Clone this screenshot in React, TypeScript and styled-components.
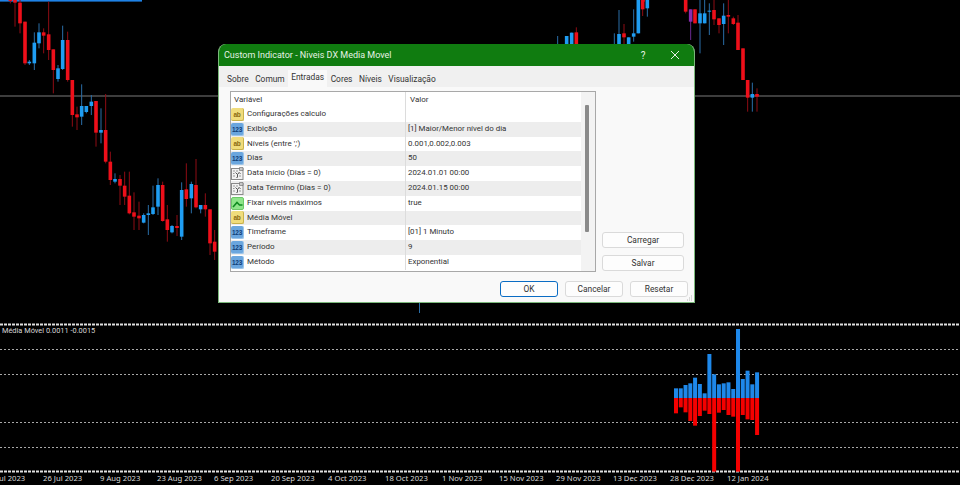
import React from "react";
import styled, { createGlobalStyle, css } from "styled-components";

const Global = createGlobalStyle`
  html, body { margin: 0; padding: 0; background: #000; overflow: hidden; }
  * { box-sizing: border-box; }
`;

const FONT = `Roboto, "Open Sans", "Liberation Sans", sans-serif`;

const Screen = styled.div`
  position: relative;
  width: 960px;
  height: 485px;
  background: #000;
  display: flex;
  flex-direction: column;
  overflow: hidden;
`;
const MainChart = styled.svg`
  display: block;
  flex: 0 0 323px;
  width: 960px;
  height: 323px;
`;
const Pane = styled.div`
  position: relative;
  flex: 0 0 150px;
  height: 150px;
`;
const PaneDrawing = styled.svg`
  display: block;
  width: 960px;
  height: 150px;
`;
const Legend = styled.div`
  position: absolute;
  left: 2px;
  top: 3px;
  font: 7.4px/10px Roboto, sans-serif;
  color: #d8d8d8;
  white-space: nowrap;
`;
const Axis = styled.div`
  display: flex;
  margin-left: -14px;
`;
const AxisLabel = styled.div`
  flex: 0 0 57px;
  font: 7.7px/11px "Noto Sans", sans-serif;
  color: #d8d8d8;
  white-space: nowrap;
`;

const Dialog = styled.div`
  position: absolute;
  left: 218px;
  top: 44px;
  width: 477px;
  height: 259px;
  border-radius: 8px 8px 0 0;
  background: #f9f9f9;
  border: 1px solid #7ab87a;
  border-top: 0;
  display: flex;
  flex-direction: column;
  font-family: ${FONT};
  color: #222;
  overflow: hidden;
`;
const TitleBar = styled.div`
  flex: 0 0 22px;
  margin: 0 -1px;
  background: #107c10;
  display: flex;
  align-items: center;
  padding: 0 15px 0 6px;
  color: #e6f2e6;
  font-size: 9px;
`;
const TitleText = styled.div`
  flex: 1;
`;
const TitleGlyph = styled.div`
  font-size: 10px;
  width: 12px;
  text-align: center;
  margin-right: 21px;
`;
const TabStrip = styled.div`
  flex: 0 0 21px;
  background: #f0f0f0;
  display: flex;
  align-items: flex-end;
  padding-left: 5px;
`;
const Tab = styled.div<{ $active?: boolean }>`
  height: 16px;
  line-height: 17px;
  font-size: 8.4px;
  padding: 0 3px;
  margin-right: 0.5px;
  color: #333;
  ${(p) =>
    p.$active &&
    css`
      background: #f9f9f9;
      height: 17px;
      line-height: 15px;
    `}
`;
const Panel = styled.div`
  flex: 1;
  display: flex;
  padding: 4px 10px 0 11px;
`;
const ListBox = styled.div`
  flex: 0 0 366px;
  height: 181px;
  border: 1px solid #a8a8a8;
  background: #fff;
  display: grid;
  grid-template-columns: 1fr 14px;
  overflow: hidden;
`;
const Rows = styled.div`
  min-width: 0;
`;
const Row = styled.div<{ $alt?: boolean; $head?: boolean }>`
  display: grid;
  grid-template-columns: 175px 1fr;
  height: ${(p) => (p.$head ? "15px" : "14.8px")};
  background: ${(p) => (p.$alt ? "#ededed" : "#fff")};
  font-size: 8px;
  line-height: ${(p) => (p.$head ? "16px" : "14.8px")};
  color: #333;
`;
const NameCell = styled.div`
  display: flex;
  align-items: center;
  gap: 3px;
  border-right: 1px solid #dcdcdc;
  white-space: nowrap;
  overflow: hidden;
`;
const HeadCell = styled.div<{ $first?: boolean }>`
  padding-left: ${(p) => (p.$first ? "3px" : "4px")};
  font-size: 8px;
  ${(p) => p.$first && "border-right: 1px solid #dcdcdc;"}
`;
const ValueCell = styled.div`
  padding-left: 2px;
  font-size: 7.9px;
  white-space: nowrap;
  overflow: hidden;
`;
const Track = styled.div`
  background: #f3f3f3;
  display: flex;
  justify-content: center;
  padding: 13px 2px 0 0;
`;
const Thumb = styled.div`
  width: 4px;
  height: 127px;
  background: #8a8a8a;
  border-radius: 1px;
`;
const Side = styled.div`
  flex: 1;
  display: flex;
  flex-direction: column;
  align-items: flex-start;
  justify-content: flex-end;
  padding: 0 0 1px 6px;
  gap: 7px;
`;
const Btn = styled.div<{ $primary?: boolean; $w: number }>`
  width: ${(p) => p.$w}px;
  height: 16px;
  background: #fdfdfd;
  border: 1px solid ${(p) => (p.$primary ? "#0a6cc4" : "#dadada")};
  border-radius: 3px;
  text-align: center;
  font-size: 8.4px;
  line-height: 14px;
  color: #333;
`;
const Footer = styled.div`
  flex: 0 0 36px;
  display: flex;
  justify-content: flex-end;
  gap: 7px;
  padding: 9px 6px 0 0;
`;
const Grip = styled.svg`
  position: absolute;
  right: 1px;
  bottom: 1px;
  width: 6px;
  height: 6px;
`;

const Badge = styled.span<{ $kind: "ab" | "num" }>`
  flex: 0 0 13px;
  width: 13px;
  height: 13px;
  border-radius: 2px;
  font: bold 6.5px/13px "Liberation Sans", sans-serif;
  text-align: center;
  letter-spacing: -0.3px;
  ${(p) =>
    p.$kind === "ab"
      ? css`
          background: #f0dc7c;
          border-right: 1px solid #c9b24a;
          border-bottom: 1px solid #c9b24a;
          color: #8a6a10;
        `
      : css`
          background: #6aa6de;
          border-right: 1px solid #9cc4e8;
          border-bottom: 1px solid #9cc4e8;
          color: #123f78;
        `}
`;
const IconSvg = styled.svg`
  flex: 0 0 13px;
  width: 13px;
  height: 13px;
`;

const DateIcon = () => (
  <IconSvg viewBox="0 0 13 13">
    <rect x="0.5" y="1.5" width="11.5" height="11" fill="#f2f2f2" stroke="#8a8a8a" />
    <path d="M2 4h2M5 4h2M2 6.5h1.5M8.5 6.5h1.5M2 9h2M5 10.5h2M8 9h2" stroke="#999" strokeWidth="1" />
    <path d="M4.5 5.5l2 2 2-2.5M6.5 7.5v2.5" fill="none" stroke="#444" strokeWidth="0.9" />
    <path d="M8.5 0.5h3.5v3h-3.5z" fill="#c8c8c8" stroke="#666" strokeWidth="0.6" />
  </IconSvg>
);
const BoolIcon = () => (
  <IconSvg viewBox="0 0 13 13">
    <rect x="0.5" y="0.5" width="12" height="12" rx="1.5" fill="#8fe58a" stroke="#6cc868" />
    <path d="M2 10L6 5.5L8.5 8H11.5" fill="none" stroke="#0f8a20" strokeWidth="1.6" />
  </IconSvg>
);

type Kind = "ab" | "num" | "date" | "bool";
const params: [Kind, string, string][] = [
  ["ab", "Configurações calculo", ""],
  ["num", "Exibição", "[1] Maior/Menor nível do dia"],
  ["ab", "Níveis (entre ',')", "0.001,0.002,0.003"],
  ["num", "Dias", "50"],
  ["date", "Data Início (Dias = 0)", "2024.01.01 00:00"],
  ["date", "Data Término (Dias = 0)", "2024.01.15 00:00"],
  ["bool", "Fixar níveis máximos", "true"],
  ["ab", "Média Móvel", ""],
  ["num", "Timeframe", "[01] 1 Minuto"],
  ["num", "Período", "9"],
  ["num", "Método", "Exponential"],
];

const RowIcon = ({ kind }: { kind: Kind }) => {
  if (kind === "date") return <DateIcon />;
  if (kind === "bool") return <BoolIcon />;
  return kind === "ab" ? <Badge $kind="ab">ab</Badge> : <Badge $kind="num">123</Badge>;
};

type C = [number, number, number, number, number, string];
const scale = (ox: number, oy: number, list: C[]): C[] =>
  list.map(([x, a, b, c, d, k]) => [ox + x / 3, oy + a / 3, oy + b / 3, oy + c / 3, oy + d / 3, k]);

const candles: C[] = [
  ...scale(0, 0, [
    [31, 0, 10, 0, 3, "r"],
    [45, 5, 80, 0, 8, "r"],
    [60, 0, 100, 8, 70, "r"],
    [75, 65, 195, 65, 190, "r"],
    [88, 180, 195, 185, 190, "b"],
    [103, 97, 210, 128, 190, "b"],
    [117, 70, 145, 97, 130, "b"],
    [131, 85, 160, 97, 107, "r"],
    [146, 5, 180, 103, 150, "r"],
    [160, 148, 280, 148, 210, "r"],
    [174, 195, 245, 205, 237, "b"],
    [188, 77, 210, 120, 207, "b"],
    [203, 95, 245, 120, 240, "r"],
    [217, 240, 380, 240, 345, "r"],
    [231, 320, 390, 343, 352, "r"],
    [245, 253, 375, 318, 350, "b"],
    [259, 318, 340, 318, 336, "b"],
    [274, 285, 345, 305, 318, "b"],
    [288, 303, 440, 303, 398, "r"],
    [303, 325, 430, 390, 398, "b"],
    [317, 282, 490, 390, 485, "r"],
  ]),
  ...scale(100, 155, [
    [31, -10, 90, 20, 75, "r"],
    [45, 55, 85, 72, 80, "b"],
    [60, 60, 150, 72, 92, "r"],
    [74, 50, 150, 92, 125, "r"],
    [88, 50, 178, 122, 175, "r"],
    [102, 112, 225, 172, 185, "r"],
    [117, 140, 225, 182, 190, "r"],
  ]),
  ...scale(130, 150, [
    [41, 190, 220, 195, 218, "b"],
    [55, 165, 255, 190, 195, "b"],
    [69, 107, 195, 172, 192, "b"],
    [84, 85, 195, 105, 170, "b"],
    [98, 95, 215, 105, 213, "r"],
    [112, 165, 275, 208, 240, "r"],
    [126, 225, 250, 228, 247, "b"],
    [141, 195, 258, 228, 234, "r"],
    [155, 97, 270, 120, 260, "b"],
    [169, 40, 170, 118, 147, "r"],
    [184, 95, 190, 102, 145, "b"],
    [198, 27, 175, 105, 172, "r"],
    [212, 165, 190, 165, 178, "b"],
    [226, 130, 200, 165, 178, "r"],
    [240, 178, 315, 178, 280, "r"],
    [254, 240, 330, 275, 305, "r"],
  ]),
  ...scale(545, 0, [
    [38, 108, 133, 132, 133, "b"],
    [65, 108, 133, 108, 133, "b"],
    [80, 98, 133, 98, 133, "b"],
    [94, 82, 133, 97, 133, "r"],
    [208, 100, 133, 132, 133, "b"],
    [222, 30, 133, 102, 133, "b"],
    [237, 72, 133, 100, 112, "r"],
    [251, 112, 133, 112, 133, "b"],
    [266, 28, 125, 100, 110, "b"],
    [280, 0, 100, 0, 100, "b"],
    [294, 0, 5, 0, 5, "r"],
  ]),
  ...scale(630, 0, [
    [38, 0, 48, 0, 28, "r"],
    [52, 0, 50, 0, 25, "b"],
    [167, 0, 40, 0, 35, "r"],
  ]),
  ...scale(690, 0, [
    [2, 28, 120, 28, 65, "p"],
    [15, 28, 70, 28, 70, "r"],
    [30, 0, 160, 40, 70, "b"],
    [44, 0, 70, 40, 70, "b"],
    [58, 10, 105, 32, 35, "b"],
    [72, 0, 75, 30, 58, "r"],
    [87, 55, 100, 55, 75, "r"],
    [101, 10, 135, 47, 72, "b"],
    [115, 0, 100, 45, 50, "r"],
    [130, 50, 75, 55, 72, "r"],
    [144, 45, 150, 68, 150, "r"],
    [159, 145, 240, 145, 240, "r"],
    [173, 240, 335, 240, 293, "r"],
    [187, 248, 335, 282, 293, "b"],
    [201, 265, 335, 282, 290, "r"],
  ]),
  [419.5, 303, 313, 303, 303, "b"],
];

const BODY: Record<string, string> = { r: "#ee0f1a", b: "#1f9df2", p: "#8a2bb0" };
const WICK: Record<string, string> = { r: "#8f0c14", b: "#2a6ea8", p: "#6a2a90" };

const blue = [205, 205, 195, 190, 173, 192, 220, 102, 163, 193, 190, 187, 207, 27, 177, 152, 193, 157];
const red = [280, 262, 277, 303, 317, 288, 272, 282, 455, 278, 270, 285, 290, 455, 285, 298, 300, 345];

const dates = [
  "12 Jul 2023", "26 Jul 2023", "9 Aug 2023", "23 Aug 2023", "6 Sep 2023", "20 Sep 2023", "4 Oct 2023",
  "18 Oct 2023", "1 Nov 2023", "15 Nov 2023", "29 Nov 2023", "13 Dec 2023", "28 Dec 2023", "12 Jan 2024",
];

export default function App() {
  return (
    <Screen>
      <Global />
      <MainChart viewBox="0 0 960 323">
        <rect x="0" y="0" width="142" height="1.6" fill="#1e82e6" />
        <line x1="0" x2="960" y1="96" y2="96" stroke="#7a7a7a" strokeWidth="1" />
        {candles.map(([x, a, b, c, d, k], i) => (
          <g key={i}>
            <line x1={x} x2={x} y1={a} y2={b} stroke={WICK[k]} strokeWidth="1" />
            <rect x={x - 1.8} y={c} width="3.6" height={Math.max(d - c, 0)} fill={BODY[k]} />
          </g>
        ))}
      </MainChart>
      <Pane>
        <PaneDrawing viewBox="0 323 960 150">
          <line x1="0" x2="960" y1="324.5" y2="324.5" stroke="#e0e0e0" strokeWidth="2" strokeDasharray="3 1" />
          {[349.5, 374.5, 422.5, 447.5].map((y) => (
            <line key={y} x1="0" x2="960" y1={y} y2={y} stroke="#a8a8a8" strokeWidth="1" strokeDasharray="2 2" />
          ))}
          <line x1="0" x2="960" y1="471.5" y2="471.5" stroke="#e0e0e0" strokeWidth="2" strokeDasharray="3 1" />
          {blue.map((t, i) => {
            const x = 674 + i * 4.77;
            const top = 320 + t / 3;
            const bottom = 320 + red[i] / 3;
            return (
              <g key={i}>
                <rect x={x} y={top} width="4" height={398 - top} fill="#1e88ea" />
                <rect x={x} y={398} width="4" height={bottom - 398} fill="#f40000" />
              </g>
            );
          })}
        </PaneDrawing>
        <Legend>Média Móvel 0.0011 -0.0015</Legend>
      </Pane>
      <Axis>
        {dates.map((d) => (
          <AxisLabel key={d}>{d}</AxisLabel>
        ))}
      </Axis>
      <Dialog>
        <TitleBar>
          <TitleText>Custom Indicator - Niveis DX Media Movel</TitleText>
          <TitleGlyph>?</TitleGlyph>
          <svg width="10" height="10" viewBox="0 0 10 10">
            <path d="M1 1l8 8M9 1l-8 8" stroke="#e6f2e6" strokeWidth="1" fill="none" />
          </svg>
        </TitleBar>
        <TabStrip>
          <Tab>Sobre</Tab>
          <Tab>Comum</Tab>
          <Tab $active>Entradas</Tab>
          <Tab>Cores</Tab>
          <Tab>Níveis</Tab>
          <Tab>Visualização</Tab>
        </TabStrip>
        <Panel>
          <ListBox>
            <Rows>
              <Row $head>
                <HeadCell $first>Variável</HeadCell>
                <HeadCell>Valor</HeadCell>
              </Row>
              {params.map(([kind, name, value], i) => (
                <Row key={name} $alt={i % 2 === 1}>
                  <NameCell>
                    <RowIcon kind={kind} />
                    {name}
                  </NameCell>
                  <ValueCell>{value}</ValueCell>
                </Row>
              ))}
            </Rows>
            <Track>
              <Thumb />
            </Track>
          </ListBox>
          <Side>
            <Btn $w={82}>Carregar</Btn>
            <Btn $w={82}>Salvar</Btn>
          </Side>
        </Panel>
        <Footer>
          <Btn $primary $w={58}>OK</Btn>
          <Btn $w={58}>Cancelar</Btn>
          <Btn $w={58}>Resetar</Btn>
        </Footer>
        <Grip viewBox="0 0 6 6">
          <path d="M4 1h1M2 3h1M4 3h1M0 5h1M2 5h1M4 5h1" stroke="#b8b8b8" strokeWidth="1" />
        </Grip>
      </Dialog>
    </Screen>
  );
}
